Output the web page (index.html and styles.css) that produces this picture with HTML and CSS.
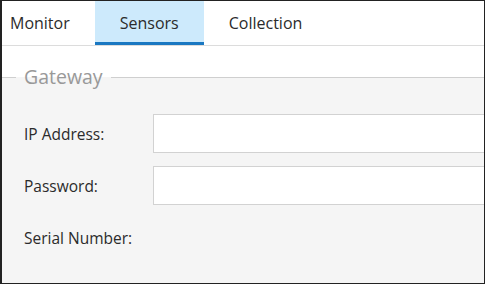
FILE: index.html
```html
<!DOCTYPE html>
<html lang="en">
<head>
    <meta charset="UTF-8">
    <meta name="viewport" content="width=device-width, initial-scale=1.0">
    <title>Sensors</title>
    <link rel="stylesheet" href="styles.css">
</head>
<body>
    <div class="frame">
        <div class="tabs">
            <div class="tab">Monitor</div>
            <div class="tab active">Sensors</div>
            <div class="tab">Collection</div>
        </div>
        <div class="content">
            <fieldset class="group">
                <legend>Gateway</legend>
                <div class="form">
                    <label for="ip">IP Address:</label>
                    <input type="text" id="ip">
                    <label for="pw">Password:</label>
                    <input type="password" id="pw">
                    <label>Serial Number:</label>
                    <span class="value"></span>
                </div>
            </fieldset>
        </div>
    </div>
</body>
</html>
```

FILE: styles.css
```css
body {
    margin: 0;
    padding: 0;
    background-color: white;
    font-family: 'Open Sans', sans-serif;
    color: #333;
}

.frame {
    box-sizing: border-box;
    width: 485px;
    height: 284px;
    border: 1px solid #222;
    border-left-width: 2px;
    overflow: hidden;
    display: flex;
    flex-direction: column;
}

.tabs {
    display: flex;
    height: 44px;
    border-bottom: 1px solid #dcdcdc;
    flex-shrink: 0;
}

.tab {
    box-sizing: border-box;
    padding: 0 25px;
    display: flex;
    align-items: center;
    font-size: 16px;
    color: #2b2b2b;
    border-bottom: 3px solid transparent;
    padding-top: 3px;
}

.tab:first-child {
    padding-left: 8px;
}

.tab.active {
    background-color: #cdeafc;
    border-bottom-color: #1a78c2;
}

.content {
    flex: 1;
    padding-top: 18px;
}

.group {
    margin: 0;
    padding: 24px 0 30px 22px;
    border: none;
    border-top: 1px solid #cfcfcf;
    background-color: #f5f5f5;
    min-height: 200px;
}

.group legend {
    margin-left: -8px;
    padding: 0 8px;
    font-size: 19.5px;
    line-height: 26px;
    color: #999;
}

.form {
    display: grid;
    grid-template-columns: 129px 340px;
    grid-auto-rows: 39px;
    row-gap: 13px;
    align-items: center;
    font-size: 15.5px;
    color: #2b2b2b;
}

.form input {
    box-sizing: border-box;
    height: 39px;
    width: 100%;
    margin: 0;
    border: 1px solid #d2d2d2;
    background-color: white;
    font-family: inherit;
}
```
